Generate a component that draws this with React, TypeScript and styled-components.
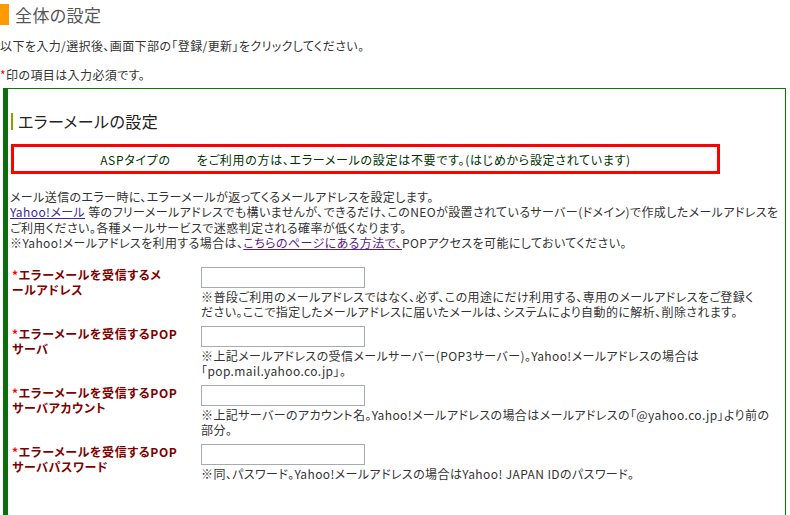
import React from 'react'
import styled, { createGlobalStyle } from 'styled-components'

const GlobalStyle = createGlobalStyle`
  html, body {
    margin: 0;
    padding: 0;
    background: #fff;
  }
  body {
    font-family: 'Noto Sans CJK JP', 'Noto Sans', sans-serif;
    font-size: 12px;
    line-height: 15px;
    color: #333;
    letter-spacing: 0.4px;
    font-feature-settings: 'palt';
  }
`

const Page = styled.div`
  width: 790px;
  height: 515px;
  overflow: hidden;
`

const PageTitle = styled.h1`
  margin: 4px 0 0;
  height: 21px;
  border-left: 9px solid #ff9900;
  padding-left: 6px;
  font-size: 17px;
  line-height: 21px;
  font-weight: normal;
  color: #555;
`

const Lead = styled.p<{ $gap: number }>`
  margin: ${(p) => p.$gap}px 0 0;
`

const Star = styled.span`
  color: #ff0000;
`

const Section = styled.section`
  margin: 6px 0 0 3px;
  width: 777px;
  border-top: 1px solid #008000;
  border-right: 1px solid #008000;
  border-left: 5px solid #0a6e0a;
  padding: 24px 0 60px;
`

const SectionTitle = styled.h2`
  margin: 0 0 0 3px;
  border-left: 2px solid #88a000;
  padding-left: 5px;
  font-size: 16px;
  line-height: 17px;
  font-weight: normal;
  color: #222;
`

const Notice = styled.div`
  margin: 14px 0 0 3px;
  width: 709px;
  height: 30px;
  box-sizing: border-box;
  border: 3px solid #ff0000;
  display: flex;
  align-items: center;
  justify-content: center;
  color: #003300;
  letter-spacing: 0.7px;
`

const Blank = styled.span`
  display: inline-block;
  width: 26px;
`

const Description = styled.p`
  margin: 15px 0 0 2px;
  line-height: 15.4px;
`

const TextLink = styled.a<{ $visited?: boolean }>`
  color: ${(p) => (p.$visited ? '#551a8b' : '#3b2a99')};
  text-decoration: underline;
`

const Form = styled.div`
  margin: 16px 0 0 4px;
  display: flex;
  flex-direction: column;
  gap: 6px;
`

const Row = styled.div`
  display: grid;
  grid-template-columns: 189px 1fr;
`

const Label = styled.div`
  font-weight: bold;
  color: #800000;
  line-height: 15.5px;
  letter-spacing: 0.6px;
`

const Field = styled.div`
  display: flex;
  flex-direction: column;
  align-items: flex-start;
`

const Input = styled.input`
  width: 164px;
  height: 21px;
  box-sizing: border-box;
  margin: 0;
  border: 1px solid #a5abb0;
  padding: 1px 3px;
  font: inherit;
  outline: none;
`

const Help = styled.div`
  margin-top: 1px;
  width: 584px;
  line-height: 15.5px;
`

const rows: { label: string[]; help: string[] }[] = [
  {
    label: ['エラーメールを受信するメ', 'ールアドレス'],
    help: [
      '※普段ご利用のメールアドレスではなく、必ず、この用途にだけ利用する、専用のメールアドレスをご登録く',
      'ださい。ここで指定したメールアドレスに届いたメールは、システムにより自動的に解析、削除されます。',
    ],
  },
  {
    label: ['エラーメールを受信するPOP', 'サーバ'],
    help: [
      '※上記メールアドレスの受信メールサーバー(POP3サーバー)。Yahoo!メールアドレスの場合は',
      '「pop.mail.yahoo.co.jp」。',
    ],
  },
  {
    label: ['エラーメールを受信するPOP', 'サーバアカウント'],
    help: [
      '※上記サーバーのアカウント名。Yahoo!メールアドレスの場合はメールアドレスの「@yahoo.co.jp」より前の',
      '部分。',
    ],
  },
  {
    label: ['エラーメールを受信するPOP', 'サーバパスワード'],
    help: ['※同、パスワード。Yahoo!メールアドレスの場合はYahoo! JAPAN IDのパスワード。'],
  },
]

export default function App() {
  return (
    <Page>
      <GlobalStyle />
      <PageTitle>全体の設定</PageTitle>
      <Lead $gap={13}>以下を入力/選択後、画面下部の「登録/更新」をクリックしてください。</Lead>
      <Lead $gap={14}>
        <Star>*</Star>印の項目は入力必須です。
      </Lead>
      <Section>
        <SectionTitle>エラーメールの設定</SectionTitle>
        <Notice>
          ASPタイプの<Blank />をご利用の方は、エラーメールの設定は不要です。(はじめから設定されています)
        </Notice>
        <Description>
          メール送信のエラー時に、エラーメールが返ってくるメールアドレスを設定します。
          <br />
          <TextLink href="#">Yahoo!メール</TextLink> 等のフリーメールアドレスでも構いませんが、できるだけ、このNEOが設置されているサーバー(ドメイン)で作成したメールアドレスを
          <br />
          ご利用ください。各種メールサービスで迷惑判定される確率が低くなります。
          <br />
          ※Yahoo!メールアドレスを利用する場合は、
          <TextLink href="#" $visited>
            こちらのページにある方法で、
          </TextLink>
          POPアクセスを可能にしておいてください。
        </Description>
        <Form>
          {rows.map((r, i) => (
            <Row key={i}>
              <Label>
                <Star>*</Star>
                {r.label[0]}
                <br />
                {r.label[1]}
              </Label>
              <Field>
                <Input type="text" />
                <Help>
                  {r.help.map((h, j) => (
                    <React.Fragment key={j}>
                      {j > 0 && <br />}
                      {h}
                    </React.Fragment>
                  ))}
                </Help>
              </Field>
            </Row>
          ))}
        </Form>
      </Section>
    </Page>
  )
}
